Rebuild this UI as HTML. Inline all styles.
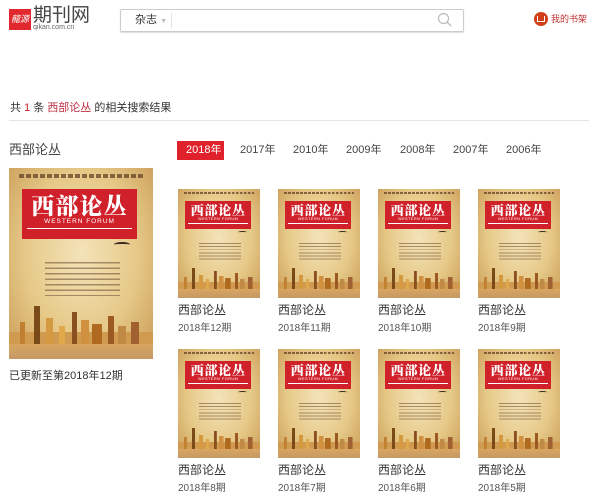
<!DOCTYPE html>
<html><head><meta charset="utf-8">
<style>
*{margin:0;padding:0;box-sizing:border-box}
body{width:600px;height:499px;background:#fff;font-family:"Liberation Sans","Noto Sans CJK SC",sans-serif;color:#333;position:relative;overflow:hidden}
.a{position:absolute}
.cv{position:absolute;width:14.4em;height:19.1em;overflow:hidden;
background:radial-gradient(ellipse at 50% 45%,#f3e3b9 0%,#e6c988 55%,#c99a55 100%);}
.cv .t{position:absolute;left:1em;right:1em;top:0.6em;height:0.35em;background:repeating-linear-gradient(90deg,#5a3a20 0 0.5em,transparent 0.5em 0.7em);opacity:.7}
.cv .b{position:absolute;left:1.3em;width:11.5em;top:2.1em;height:5em;background:#d0202a;color:#fff;text-align:center}
.cv .b .h{font-family:"Noto Serif CJK SC",serif;font-weight:900;font-size:2.3em;line-height:1.2em;letter-spacing:.05em;margin-top:.1em}
.cv .b .e{font-size:.65em;letter-spacing:.15em;line-height:1em}
.cv .b .l{border-top:.1em solid #fff;margin:.25em .5em 0;height:.6em}
.cv .bird{position:absolute;left:10.5em;top:7.4em;width:1.6em;height:.5em;border-top:.25em solid #3a2a20;border-radius:50% 50% 0 0}
.cv .tx{position:absolute;left:3.6em;top:9.4em;width:7.5em;height:3.4em;background:repeating-linear-gradient(180deg,#6a4a30 0 .15em,transparent .15em .55em);opacity:.55}
.cv .sk{position:absolute;left:0;right:0;bottom:1.5em;height:4.5em;
background:
linear-gradient(#c08030,#c08030) 8% 100%/ .5em 2.2em no-repeat,
linear-gradient(#7a4a18,#7a4a18) 18% 100%/ .6em 3.8em no-repeat,
linear-gradient(#d59a40,#d59a40) 27% 100%/ .7em 2.6em no-repeat,
linear-gradient(#e0a84a,#e0a84a) 36% 100%/ .6em 1.8em no-repeat,
linear-gradient(#8a5020,#8a5020) 45% 100%/ .5em 3.2em no-repeat,
linear-gradient(#d09040,#d09040) 53% 100%/ .8em 2.4em no-repeat,
linear-gradient(#b06a20,#b06a20) 62% 100%/ 1em 2em no-repeat,
linear-gradient(#9a5a22,#9a5a22) 72% 100%/ .6em 2.8em no-repeat,
linear-gradient(#c08a45,#c08a45) 80% 100%/ .8em 1.8em no-repeat,
linear-gradient(#a06030,#a06030) 90% 100%/ .8em 2.2em no-repeat,
linear-gradient(#d09a50,#d09a50) 0 100%/ 100% 1.2em no-repeat}
.cv .rf{position:absolute;left:0;right:0;bottom:0;height:1.5em;background:linear-gradient(#d9a560,#c49a65)}
.yr{position:absolute;top:141px;font-size:11px;line-height:19px;color:#444}
.ti{position:absolute;font-size:12px;color:#333}
.is{position:absolute;font-size:10px;color:#555}
</style></head><body>
<div class="a" style="left:9px;top:9px;width:22px;height:21px;background:#e0282e;color:#fff;font-size:9px;line-height:21px;text-align:center;font-style:italic">龍源</div>
<div class="a" style="left:33px;top:6px;font-size:19px;line-height:20px;color:#444">期刊网</div>
<div class="a" style="left:33px;top:24px;font-size:7px;color:#666">qikan.com.cn</div>
<div class="a" style="left:120px;top:9px;width:344px;height:23px;border:1px solid #ccc;border-radius:2px;box-shadow:0 1px 1px #ddd"></div>
<div class="a" style="left:135px;top:12px;font-size:11px;line-height:16px">杂志 <span style="color:#bbb;font-size:7px">▼</span></div>
<div class="a" style="left:171px;top:13px;width:1px;height:15px;background:#e4e4e4"></div>
<svg class="a" style="left:437px;top:12px" width="16" height="16"><circle cx="6.5" cy="6.5" r="5" fill="none" stroke="#bbb" stroke-width="1.2"/><line x1="10" y1="10" x2="14" y2="14" stroke="#bbb" stroke-width="1.3"/></svg>
<div class="a" style="left:534px;top:12px;width:14px;height:14px;border-radius:50%;background:#d2401a"></div>
<div class="a" style="left:537px;top:16px;width:8px;height:6px;border:1px solid #fff;border-top:none"></div>
<div class="a" style="left:551px;top:12px;font-size:9px;line-height:14px;color:#c03030">我的书架</div>
<div class="a" style="left:10px;top:99px;font-size:11px;color:#333">共 <span style="color:#d0202a">1</span> 条 <span style="color:#c03040">西部论丛</span> 的相关搜索结果</div>
<div class="a" style="left:9px;top:120px;width:580px;height:1px;background:#e5e5e5"></div>
<div class="a" style="left:9px;top:139px;font-size:13px;color:#444">西部论丛</div>
<div class="cv" style="left:9px;top:168px;font-size:10px"><div class="t"></div><div class="b"><div class="h">西部论丛</div><div class="e">WESTERN FORUM</div><div class="l"></div></div><div class="bird"></div><div class="tx"></div><div class="sk"></div><div class="rf"></div></div>
<div class="a" style="left:9px;top:367px;font-size:11px;color:#333">已更新至第2018年12期</div>
<div class="a" style="left:177px;top:141px;width:47px;height:19px;background:#e0202a"></div>
<div class="yr" style="left:186px;color:#fff">2018年</div>
<div class="yr" style="left:240px">2017年</div>
<div class="yr" style="left:293px">2010年</div>
<div class="yr" style="left:346px">2009年</div>
<div class="yr" style="left:400px">2008年</div>
<div class="yr" style="left:453px">2007年</div>
<div class="yr" style="left:506px">2006年</div>

<div class="cv" style="left:178px;top:189px;font-size:5.7px"><div class="t"></div><div class="b"><div class="h">西部论丛</div><div class="e">WESTERN FORUM</div><div class="l"></div></div><div class="bird"></div><div class="tx"></div><div class="sk"></div><div class="rf"></div></div>
<div class="cv" style="left:278px;top:189px;font-size:5.7px"><div class="t"></div><div class="b"><div class="h">西部论丛</div><div class="e">WESTERN FORUM</div><div class="l"></div></div><div class="bird"></div><div class="tx"></div><div class="sk"></div><div class="rf"></div></div>
<div class="cv" style="left:378px;top:189px;font-size:5.7px"><div class="t"></div><div class="b"><div class="h">西部论丛</div><div class="e">WESTERN FORUM</div><div class="l"></div></div><div class="bird"></div><div class="tx"></div><div class="sk"></div><div class="rf"></div></div>
<div class="cv" style="left:478px;top:189px;font-size:5.7px"><div class="t"></div><div class="b"><div class="h">西部论丛</div><div class="e">WESTERN FORUM</div><div class="l"></div></div><div class="bird"></div><div class="tx"></div><div class="sk"></div><div class="rf"></div></div>
<div class="ti" style="left:178px;top:301px">西部论丛</div><div class="is" style="left:178px;top:319px">2018年12期</div>
<div class="ti" style="left:278px;top:301px">西部论丛</div><div class="is" style="left:278px;top:319px">2018年11期</div>
<div class="ti" style="left:378px;top:301px">西部论丛</div><div class="is" style="left:378px;top:319px">2018年10期</div>
<div class="ti" style="left:478px;top:301px">西部论丛</div><div class="is" style="left:478px;top:319px">2018年9期</div>

<div class="cv" style="left:178px;top:349px;font-size:5.7px"><div class="t"></div><div class="b"><div class="h">西部论丛</div><div class="e">WESTERN FORUM</div><div class="l"></div></div><div class="bird"></div><div class="tx"></div><div class="sk"></div><div class="rf"></div></div>
<div class="cv" style="left:278px;top:349px;font-size:5.7px"><div class="t"></div><div class="b"><div class="h">西部论丛</div><div class="e">WESTERN FORUM</div><div class="l"></div></div><div class="bird"></div><div class="tx"></div><div class="sk"></div><div class="rf"></div></div>
<div class="cv" style="left:378px;top:349px;font-size:5.7px"><div class="t"></div><div class="b"><div class="h">西部论丛</div><div class="e">WESTERN FORUM</div><div class="l"></div></div><div class="bird"></div><div class="tx"></div><div class="sk"></div><div class="rf"></div></div>
<div class="cv" style="left:478px;top:349px;font-size:5.7px"><div class="t"></div><div class="b"><div class="h">西部论丛</div><div class="e">WESTERN FORUM</div><div class="l"></div></div><div class="bird"></div><div class="tx"></div><div class="sk"></div><div class="rf"></div></div>
<div class="ti" style="left:178px;top:461px">西部论丛</div><div class="is" style="left:178px;top:479px">2018年8期</div>
<div class="ti" style="left:278px;top:461px">西部论丛</div><div class="is" style="left:278px;top:479px">2018年7期</div>
<div class="ti" style="left:378px;top:461px">西部论丛</div><div class="is" style="left:378px;top:479px">2018年6期</div>
<div class="ti" style="left:478px;top:461px">西部论丛</div><div class="is" style="left:478px;top:479px">2018年5期</div>
</body></html>
